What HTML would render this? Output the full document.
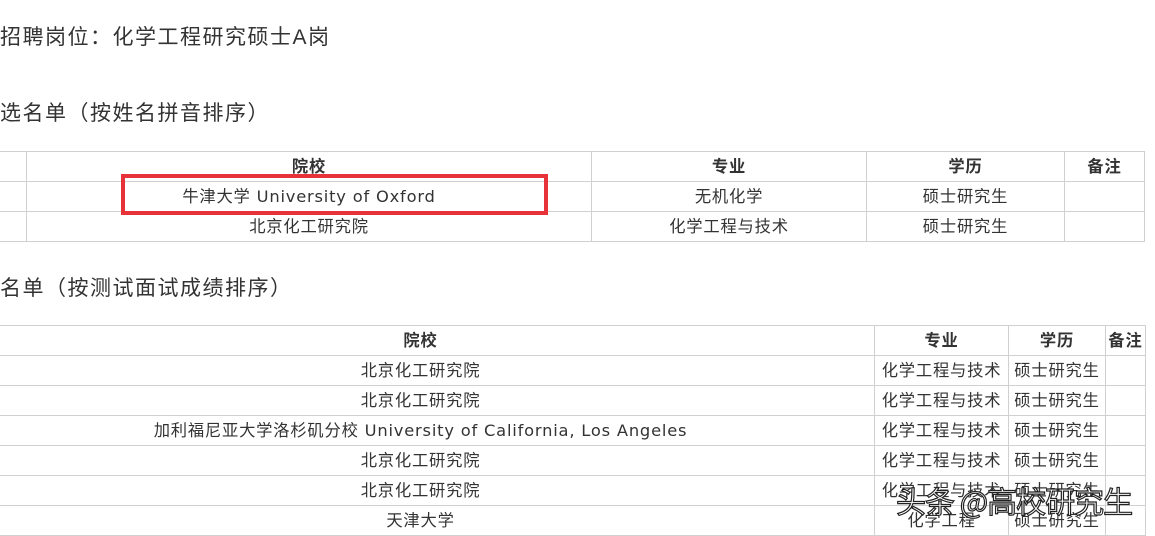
<html><head><style>
body{margin:0;width:1155px;height:533px;background:#fff;overflow:hidden;position:relative;font-family:"DejaVu Sans","Noto Sans CJK SC",sans-serif;color:#333}
.h{position:absolute;left:0;font-size:21px;letter-spacing:1.5px;white-space:nowrap;line-height:24px;font-family:"Liberation Sans","Noto Sans CJK SC",sans-serif}
table{position:absolute;border-collapse:collapse;font-size:16.3px;table-layout:fixed;letter-spacing:0.8px}
td{border:1px solid #d0d0d0;height:29px;padding:0;text-align:center;white-space:nowrap;overflow:hidden;line-height:29px}
th{border:1px solid #d0d0d0;height:29px;padding:0;font-weight:bold;white-space:nowrap;line-height:29px}
.wm{position:absolute;left:896px;top:482px;font-size:30px;color:#fff;letter-spacing:-1px;-webkit-text-stroke:1.2px #222;font-family:"Noto Sans CJK SC",sans-serif;line-height:36px}
</style></head><body>
<div class="h" style="top:26px">招聘岗位：化学工程研究硕士A岗</div>
<div class="h" style="top:102px">选名单（按姓名拼音排序）</div>
<div class="h" style="top:277px">名单（按测试面试成绩排序）</div>
<table style="left:-30px;top:151px;width:1175px">
<colgroup><col style="width:56px"><col style="width:565px"><col style="width:275px"><col style="width:198px"><col style="width:80px"></colgroup>
<tr><td></td><th>院校</th><th>专业</th><th>学历</th><th>备注</th></tr>
<tr><td></td><td>牛津大学 University of Oxford</td><td>无机化学</td><td>硕士研究生</td><td></td></tr>
<tr><td></td><td>北京化工研究院</td><td>化学工程与技术</td><td>硕士研究生</td><td></td></tr>
</table>
<div style="position:absolute;left:121px;top:174px;width:419px;height:33px;border:4px solid #e8323a"></div>
<table style="left:-34px;top:325px;width:1179px">
<colgroup><col style="width:908px"><col style="width:134px"><col style="width:97px"><col style="width:40px"></colgroup>
<tr><th>院校</th><th>专业</th><th>学历</th><th>备注</th></tr>
<tr><td>北京化工研究院</td><td>化学工程与技术</td><td>硕士研究生</td><td></td></tr>
<tr><td>北京化工研究院</td><td>化学工程与技术</td><td>硕士研究生</td><td></td></tr>
<tr><td>加利福尼亚大学洛杉矶分校 University of California, Los Angeles</td><td>化学工程与技术</td><td>硕士研究生</td><td></td></tr>
<tr><td>北京化工研究院</td><td>化学工程与技术</td><td>硕士研究生</td><td></td></tr>
<tr><td>北京化工研究院</td><td>化学工程与技术</td><td>硕士研究生</td><td></td></tr>
<tr><td>天津大学</td><td>化学工程</td><td>硕士研究生</td><td></td></tr>
</table>
<div class="wm">头条 @高校研究生</div>
</body></html>
